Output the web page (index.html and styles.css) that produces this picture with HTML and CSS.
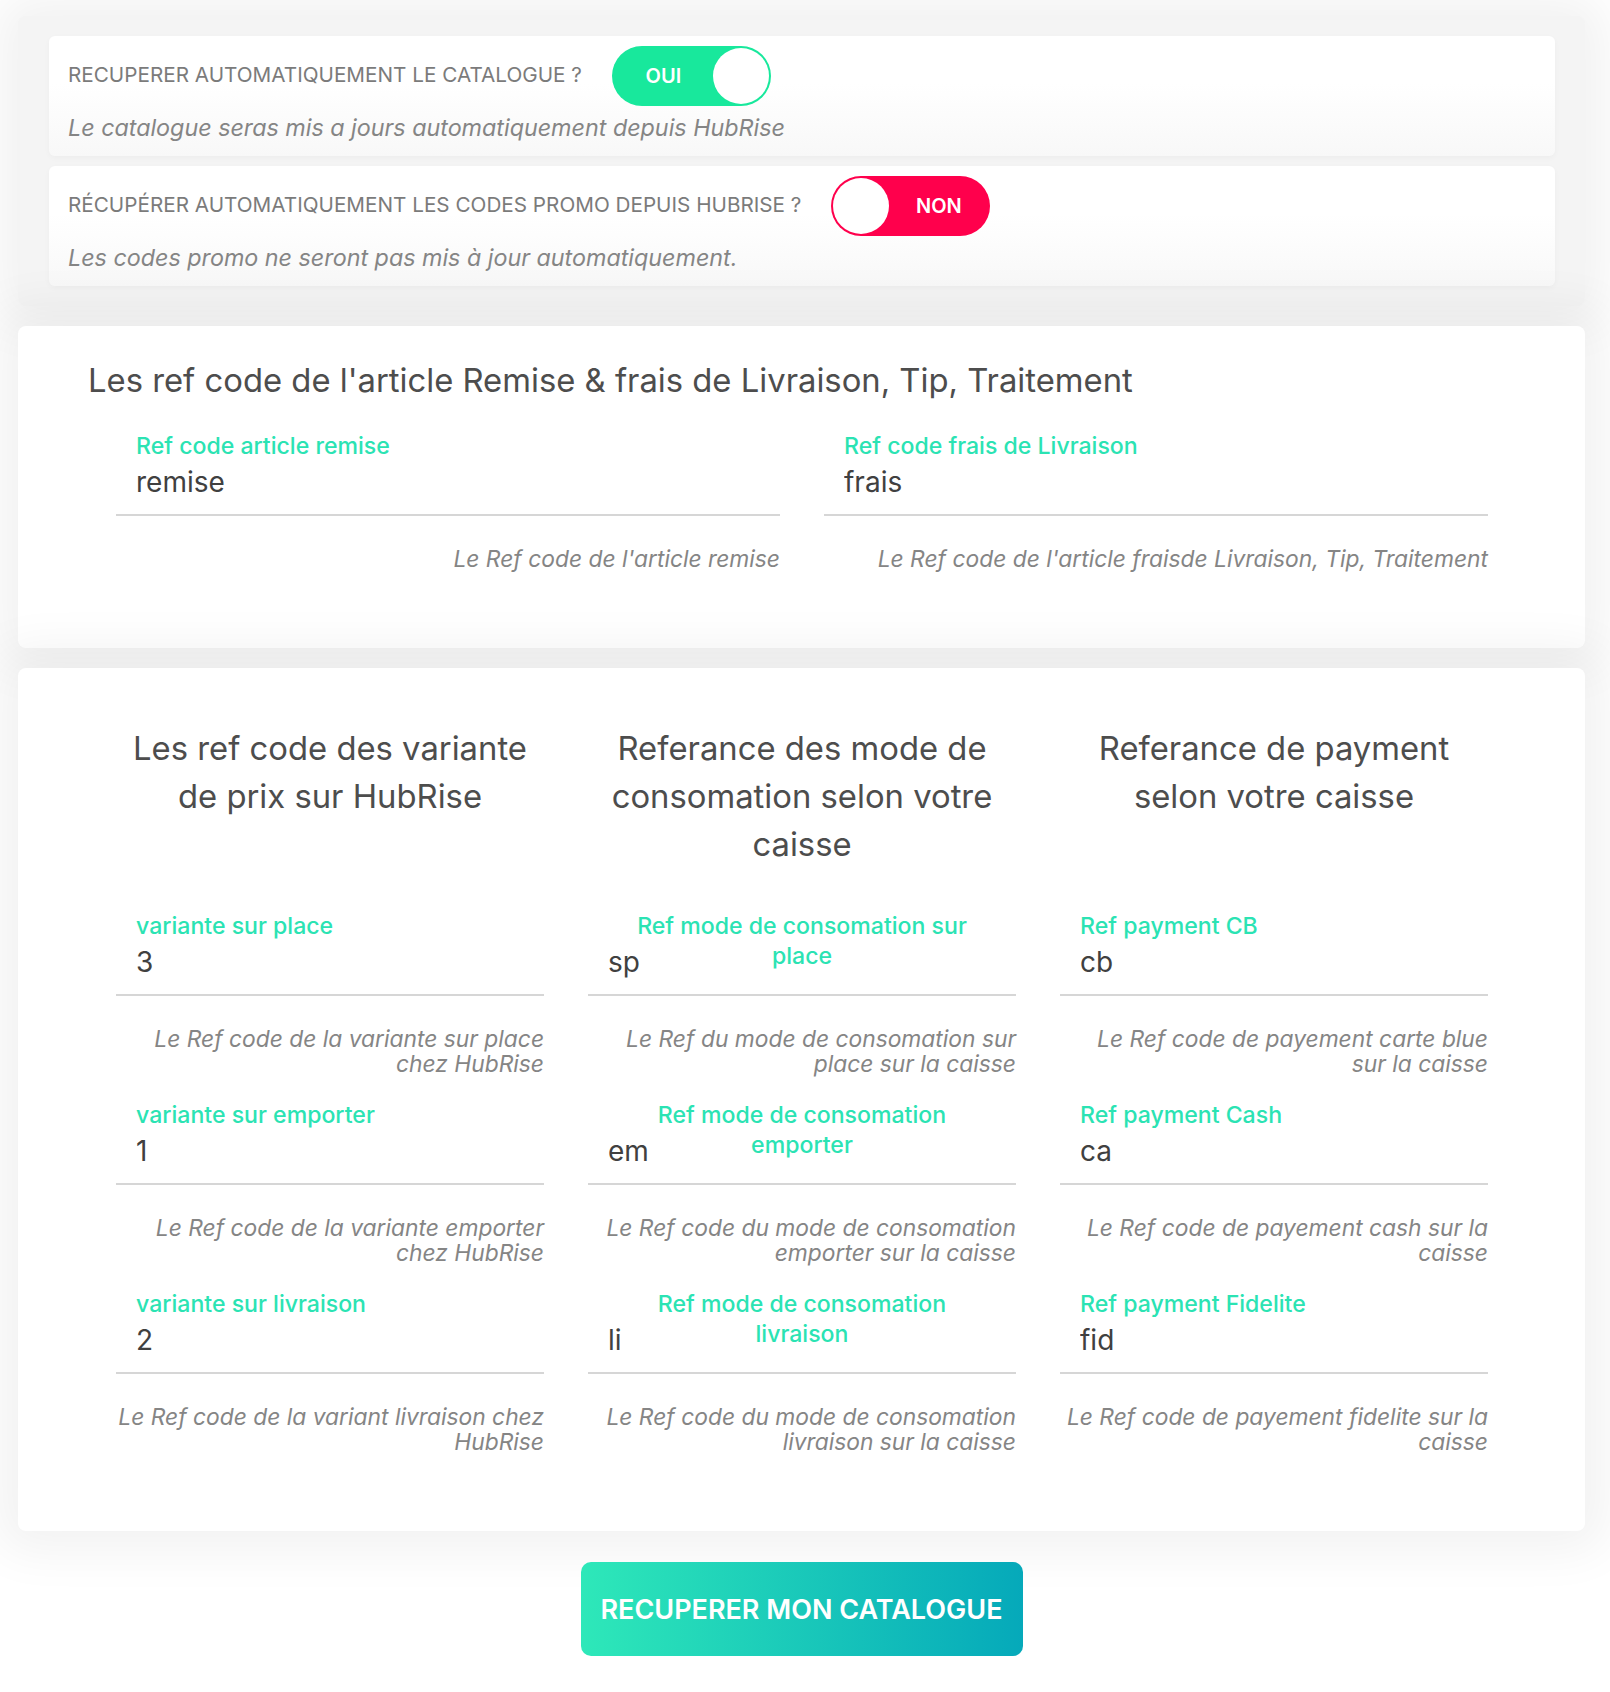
FILE: index.html
```html
<!DOCTYPE html>
<html lang="fr">
<head>
    <meta charset="UTF-8">
    <meta name="viewport" content="width=device-width, initial-scale=1.0">
    <title>Catalogue HubRise</title>
    <link rel="stylesheet" href="styles.css">
</head>
<body>

<div class="page">

    <section class="card sync-card">
        <div class="sync-row">
            <div class="sync-line">
                <span class="sync-title">RECUPERER AUTOMATIQUEMENT LE CATALOGUE ?</span>
                <div class="toggle on">
                    <span class="toggle-text">OUI</span>
                    <span class="knob"></span>
                </div>
            </div>
            <p class="sync-desc">Le catalogue seras mis a jours automatiquement depuis HubRise</p>
        </div>
        <div class="sync-row">
            <div class="sync-line">
                <span class="sync-title">RÉCUPÉRER AUTOMATIQUEMENT LES CODES PROMO DEPUIS HUBRISE ?</span>
                <div class="toggle off">
                    <span class="knob"></span>
                    <span class="toggle-text">NON</span>
                </div>
            </div>
            <p class="sync-desc">Les codes promo ne seront pas mis à jour automatiquement.</p>
        </div>
    </section>

    <section class="card refs-card refs-article">
        <h2 class="card-title">Les ref code de l'article Remise &amp; frais de Livraison, Tip, Traitement</h2>
        <div class="grid-2">
            <div class="field">
                <label class="field-label">Ref code article remise</label>
                <input class="field-input" type="text" value="remise">
                <div class="field-help">Le Ref code de l'article remise</div>
            </div>
            <div class="field">
                <label class="field-label">Ref code frais de Livraison</label>
                <input class="field-input" type="text" value="frais">
                <div class="field-help">Le Ref code de l'article fraisde Livraison, Tip, Traitement</div>
            </div>
        </div>
    </section>

    <section class="card refs-card refs-modes">
        <div class="grid-3">
            <h3 class="col-title">Les ref code des variante de prix sur HubRise</h3>
            <h3 class="col-title">Referance des mode de consomation selon votre caisse</h3>
            <h3 class="col-title">Referance de payment selon votre caisse</h3>

            <div class="col">
                <div class="field">
                    <label class="field-label">variante sur place</label>
                    <input class="field-input" type="text" value="3">
                    <div class="field-help">Le Ref code de la variante sur place chez HubRise</div>
                </div>
                <div class="field">
                    <label class="field-label">variante sur emporter</label>
                    <input class="field-input" type="text" value="1">
                    <div class="field-help">Le Ref code de la variante emporter chez HubRise</div>
                </div>
                <div class="field">
                    <label class="field-label">variante sur livraison</label>
                    <input class="field-input" type="text" value="2">
                    <div class="field-help">Le Ref code de la variant livraison chez HubRise</div>
                </div>
            </div>

            <div class="col">
                <div class="field">
                    <label class="field-label centered">Ref mode de consomation sur place</label>
                    <input class="field-input" type="text" value="sp">
                    <div class="field-help">Le Ref du mode de consomation sur place sur la caisse</div>
                </div>
                <div class="field">
                    <label class="field-label centered">Ref mode de consomation emporter</label>
                    <input class="field-input" type="text" value="em">
                    <div class="field-help">Le Ref code du mode de consomation emporter sur la caisse</div>
                </div>
                <div class="field">
                    <label class="field-label centered">Ref mode de consomation livraison</label>
                    <input class="field-input" type="text" value="li">
                    <div class="field-help">Le Ref code du mode de consomation livraison sur la caisse</div>
                </div>
            </div>

            <div class="col">
                <div class="field">
                    <label class="field-label">Ref payment CB</label>
                    <input class="field-input" type="text" value="cb">
                    <div class="field-help">Le Ref code de payement carte blue sur la caisse</div>
                </div>
                <div class="field">
                    <label class="field-label">Ref payment Cash</label>
                    <input class="field-input" type="text" value="ca">
                    <div class="field-help">Le Ref code de payement cash sur la caisse</div>
                </div>
                <div class="field">
                    <label class="field-label">Ref payment Fidelite</label>
                    <input class="field-input" type="text" value="fid">
                    <div class="field-help">Le Ref code de payement fidelite sur la caisse</div>
                </div>
            </div>
        </div>
    </section>

    <div class="actions">
        <button class="btn-main">RECUPERER MON CATALOGUE</button>
    </div>

</div>

</body>
</html>
```

FILE: styles.css
```css
body {
    margin: 0;
    background: #fff;
    font-family: Inter, "Open Sans", Arial, sans-serif;
    color: #4d4d4d;
}
.page {
    padding: 16px 25px 36px 18px;
}
.card {
    border-radius: 8px;
    box-shadow: 0 0 50px 20px rgba(0, 0, 0, 0.055);
    margin-bottom: 20px;
}

/* top block with the two switches */
.sync-card {
    background: #f4f4f4;
    padding: 20px 30px 10px 31px;
}
.sync-row {
    background: linear-gradient(to bottom, #fff 40%, #f8f8f8);
    border-radius: 6px;
    padding: 10px 20px 13px 19px;
    margin-bottom: 10px;
    box-shadow: 0 2px 6px rgba(0, 0, 0, 0.03);
}
.sync-line {
    display: flex;
    align-items: center;
    gap: 30px;
    height: 60px;
}
.sync-title {
    font-size: 20.7px;
    color: #7b7b7b;
    padding-bottom: 3px;
}
.sync-desc {
    margin: 7px 0 0;
    font-size: 23.3px;
    line-height: 30px;
    font-style: italic;
    color: #858585;
}
.toggle {
    width: 159px;
    height: 60px;
    border-radius: 30px;
    display: flex;
    align-items: center;
    box-sizing: border-box;
    padding: 2px;
    cursor: pointer;
}
.toggle.on {
    background: #18e89c;
}
.toggle.off {
    background: #ff004c;
}
.toggle-text {
    flex: 1;
    text-align: center;
    color: #fff;
    font-weight: 600;
    font-size: 20px;
}
.knob {
    width: 56px;
    height: 56px;
    border-radius: 50%;
    background: #fff;
}

/* ref code cards */
.refs-card {
    background: #fff;
}
.refs-article {
    padding: 30px 97px 53px 70px;
}
.card-title {
    margin: 0 0 27px;
    font-size: 32.8px;
    line-height: 48px;
    font-weight: 400;
    color: #4d4d4d;
}
.grid-2 {
    display: grid;
    grid-template-columns: 1fr 1fr;
    column-gap: 44px;
    margin-left: 28px;
}
.refs-modes {
    padding: 56px 97px 53px 98px;
    margin-bottom: 31px;
}
.grid-3 {
    display: grid;
    grid-template-columns: repeat(3, 1fr);
    column-gap: 44px;
    row-gap: 43px;
}
.col-title {
    margin: 0;
    text-align: center;
    font-size: 32.8px;
    line-height: 48px;
    font-weight: 400;
    color: #4d4d4d;
}

.field {
    position: relative;
    padding-top: 35px;
    margin-bottom: 24px;
}
.field-label {
    position: absolute;
    top: 0;
    left: 20px;
    right: 20px;
    font-size: 23.1px;
    line-height: 30px;
    font-weight: 500;
    color: #2be3b3;
}
.field-label.centered {
    text-align: center;
    left: 0;
    right: 0;
    padding: 0 40px;
}
.field-input {
    display: block;
    width: 100%;
    box-sizing: border-box;
    margin: 0;
    padding: 0 20px 16px;
    height: 50px;
    border: none;
    border-bottom: 2px solid #d6d6d6;
    background: transparent;
    font-family: inherit;
    font-size: 28px;
    line-height: 32px;
    color: #404040;
    outline: none;
}
.field-help {
    margin-top: 30px;
    text-align: right;
    font-size: 22.8px;
    line-height: 25px;
    font-style: italic;
    color: #858585;
}

.actions {
    display: flex;
    justify-content: center;
}
.btn-main {
    width: 442px;
    height: 94px;
    border: none;
    border-radius: 10px;
    background: linear-gradient(to right, #2ee8b9, #05a9ba);
    color: #fff;
    font-family: inherit;
    font-size: 27px;
    font-weight: 600;
    cursor: pointer;
}
```
